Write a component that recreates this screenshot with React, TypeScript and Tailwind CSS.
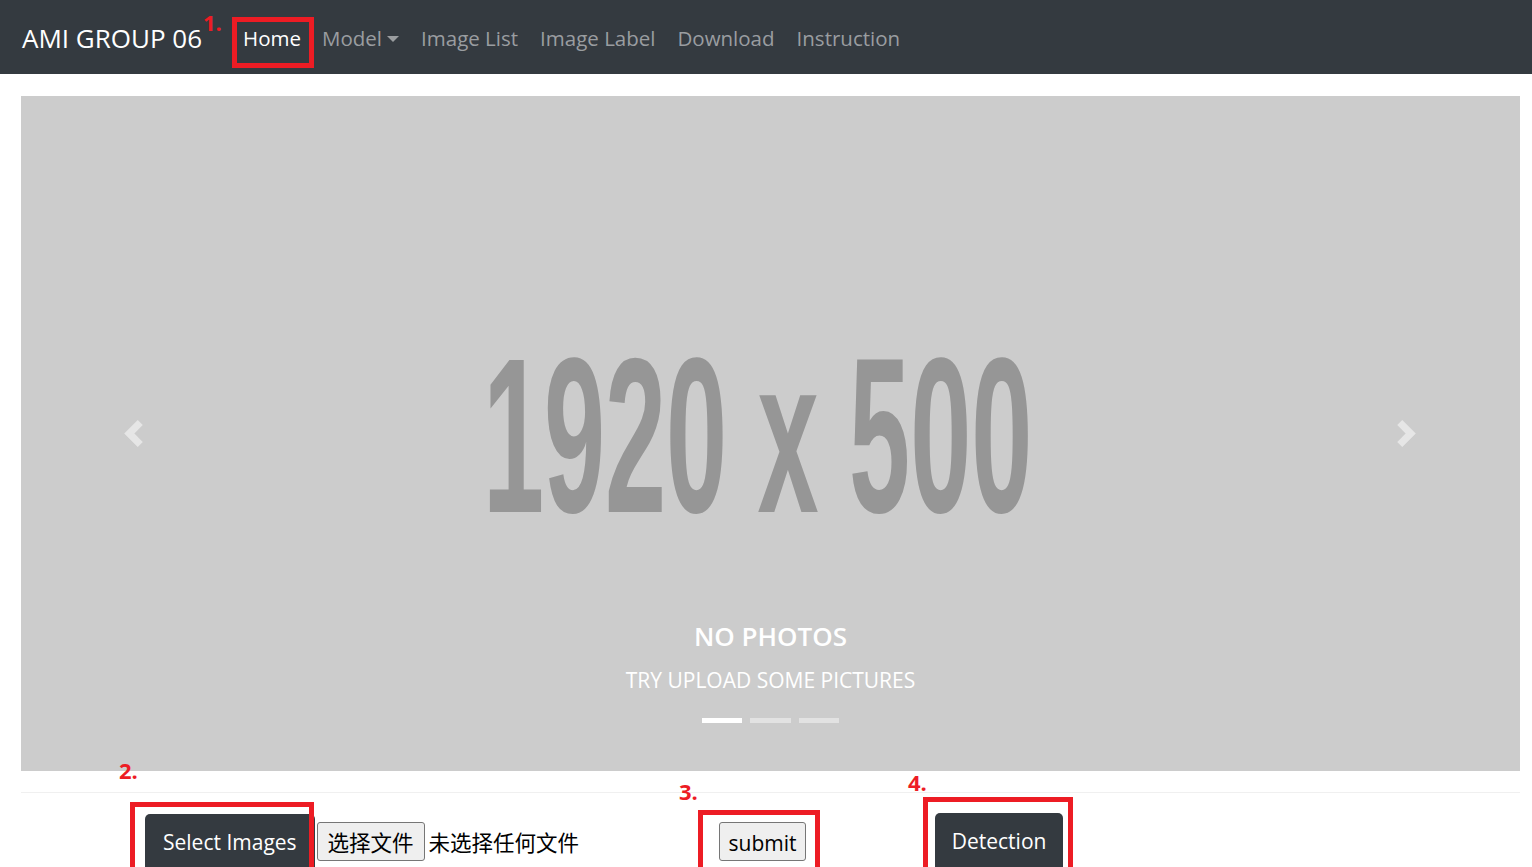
import React from "react";

const RED = "border-[#ed1c24]";

function Chevron({ dir }: { dir: "left" | "right" }) {
  return (
    <svg width="27" height="27" viewBox="0 0 8 8" fill="#e6e6e6">
      {dir === "left" ? (
        <path d="M5.25 0l-4 4 4 4 1.5-1.5L4.25 4l2.5-2.5L5.25 0z" />
      ) : (
        <path d="M2.75 0l-1.5 1.5L3.75 4l-2.5 2.5L2.75 8l4-4-4-4z" />
      )}
    </svg>
  );
}

export default function App() {
  const font = { fontFamily: '"Open Sans", "Noto Sans", sans-serif' };
  return (
    <div className="relative min-h-[867px] bg-white" style={font}>
      {/* Navbar */}
      <nav className="flex h-[74px] items-center bg-[#343a40] pl-[22px] pt-[2px]">
        <span className="text-[26px] leading-none text-white">AMI GROUP 06</span>
        <ul className="ml-[31px] flex items-center text-[20.5px] leading-none">
          <li className="px-[10px] text-white">Home</li>
          <li className="flex items-center px-[11px] text-[#9a9da0]">
            Model
            <span className="ml-[5px] mt-[2px] inline-block h-0 w-0 border-x-[6px] border-t-[6px] border-x-transparent border-t-[#9a9da0]" />
          </li>
          <li className="px-[11px] text-[#9a9da0]">Image List</li>
          <li className="px-[11px] text-[#9a9da0]">Image Label</li>
          <li className="px-[11px] text-[#9a9da0]">Download</li>
          <li className="px-[11px] text-[#9a9da0]">Instruction</li>
        </ul>
      </nav>

      {/* Carousel */}
      <div className="ml-[21px] mr-[12px] mt-[22px]">
        <div className="relative flex h-[675px] items-center justify-center overflow-hidden bg-[#cccccc]">
          <span
            className="inline-block -translate-x-[13px] translate-y-[1px] scale-x-[0.49] scale-y-[0.99] text-[224px] font-bold leading-none text-[#969696] whitespace-nowrap"
            style={{ fontFamily: '"Liberation Sans", Arial, sans-serif' }}
          >
            1920 x 500
          </span>
          <div className="absolute left-[99px] top-[324px]">
            <Chevron dir="left" />
          </div>
          <div className="absolute right-[100px] top-[324px]">
            <Chevron dir="right" />
          </div>
          <div className="absolute bottom-[48px] left-0 right-0 flex flex-col items-center text-white">
            <div className="text-[26px] font-semibold leading-none">NO PHOTOS</div>
            <div className="mt-[21px] text-[21px] leading-none text-white">TRY UPLOAD SOME PICTURES</div>
            <div className="mt-[27px] flex gap-[8px]">
              <span className="h-[5px] w-[40px] bg-white" />
              <span className="h-[5px] w-[41px] bg-[#e2e2e2]" />
              <span className="h-[5px] w-[40px] bg-[#e2e2e2]" />
            </div>
          </div>
        </div>
        <div className="mt-[21px] h-px bg-[#f0f0f0]" />
      </div>

      {/* Controls row */}
      <div className="flex items-start">
        <button className="ml-[145px] mt-[21px] flex h-[62px] items-start self-start rounded-t-[5px] bg-[#343a40] px-[18px] pt-[13px] text-[21px] leading-[30px] text-white">
          Select Images
        </button>
        <div className="ml-[2px] mt-[29px] flex items-center">
          <span
            className="flex h-[39px] w-[108px] items-center justify-center rounded-[3px] border border-[#767676] bg-[#efefef] pt-[1px] text-[21.5px] text-black"
            style={{ fontFamily: '"Noto Sans CJK SC", sans-serif' }}
          >
            选择文件
          </span>
          <span
            className="ml-[4px] pt-[1px] text-[21.5px] text-black"
            style={{ fontFamily: '"Noto Sans CJK SC", sans-serif' }}
          >
            未选择任何文件
          </span>
        </div>
        <button className="ml-[140px] mt-[29px] flex h-[39px] w-[87px] items-center justify-center rounded-[3px] border border-[#767676] bg-[#efefef] pt-[4px] text-[21px] text-black">
          submit
        </button>
        <button className="ml-[129px] mt-[20px] flex h-[62px] w-[128px] items-start justify-center rounded-t-[5px] bg-[#343a40] pt-[13px] text-[21px] leading-[30px] text-white">
          Detection
        </button>
      </div>

      {/* Annotations */}
      <div className={`absolute left-[232px] top-[17px] h-[51px] w-[82px] border-[5px] ${RED}`} />
      <span className="absolute left-[203px] top-[11px] text-[22px] font-bold leading-none text-[#ed1c24]">1.</span>

      <div className={`absolute left-[130px] top-[802px] h-[80px] w-[184px] border-[5px] ${RED}`} />
      <span className="absolute left-[119px] top-[759px] text-[22px] font-bold leading-none text-[#ed1c24]">2.</span>

      <div className={`absolute left-[698px] top-[810px] h-[80px] w-[122px] border-[5px] ${RED}`} />
      <span className="absolute left-[679px] top-[780px] text-[22px] font-bold leading-none text-[#ed1c24]">3.</span>

      <div className={`absolute left-[923px] top-[797px] h-[80px] w-[150px] border-[5px] ${RED}`} />
      <span className="absolute left-[908px] top-[771px] text-[22px] font-bold leading-none text-[#ed1c24]">4.</span>
    </div>
  );
}
